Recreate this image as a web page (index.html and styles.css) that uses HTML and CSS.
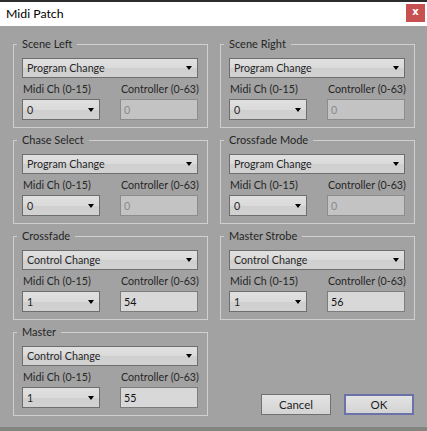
FILE: index.html
```html
<!DOCTYPE html>
<html>
<head>
<meta charset="utf-8">
<link rel="stylesheet" href="styles.css">
</head>
<body>
<div class="window">
  <div class="titlebar">
    <span class="title">Midi Patch</span>
    <span class="close">x</span>
  </div>
  <div class="content">
    <div class="group">
      <span class="legend">Scene Left</span>
      <div class="select"><span>Program Change</span><i class="arrow"></i></div>
      <div class="row">
        <div class="col"><div class="lbl">Midi Ch (0-15)</div><div class="select"><span>0</span><i class="arrow"></i></div></div>
        <div class="col"><div class="lbl">Controller (0-63)</div><div class="input disabled">0</div></div>
      </div>
    </div>
    <div class="group">
      <span class="legend">Scene Right</span>
      <div class="select"><span>Program Change</span><i class="arrow"></i></div>
      <div class="row">
        <div class="col"><div class="lbl">Midi Ch (0-15)</div><div class="select"><span>0</span><i class="arrow"></i></div></div>
        <div class="col"><div class="lbl">Controller (0-63)</div><div class="input disabled">0</div></div>
      </div>
    </div>
    <div class="group">
      <span class="legend">Chase Select</span>
      <div class="select"><span>Program Change</span><i class="arrow"></i></div>
      <div class="row">
        <div class="col"><div class="lbl">Midi Ch (0-15)</div><div class="select"><span>0</span><i class="arrow"></i></div></div>
        <div class="col"><div class="lbl">Controller (0-63)</div><div class="input disabled">0</div></div>
      </div>
    </div>
    <div class="group">
      <span class="legend">Crossfade Mode</span>
      <div class="select"><span>Program Change</span><i class="arrow"></i></div>
      <div class="row">
        <div class="col"><div class="lbl">Midi Ch (0-15)</div><div class="select"><span>0</span><i class="arrow"></i></div></div>
        <div class="col"><div class="lbl">Controller (0-63)</div><div class="input disabled">0</div></div>
      </div>
    </div>
    <div class="group">
      <span class="legend">Crossfade</span>
      <div class="select"><span>Control Change</span><i class="arrow"></i></div>
      <div class="row">
        <div class="col"><div class="lbl">Midi Ch (0-15)</div><div class="select"><span>1</span><i class="arrow"></i></div></div>
        <div class="col"><div class="lbl">Controller (0-63)</div><div class="input">54</div></div>
      </div>
    </div>
    <div class="group">
      <span class="legend">Master Strobe</span>
      <div class="select"><span>Control Change</span><i class="arrow"></i></div>
      <div class="row">
        <div class="col"><div class="lbl">Midi Ch (0-15)</div><div class="select"><span>1</span><i class="arrow"></i></div></div>
        <div class="col"><div class="lbl">Controller (0-63)</div><div class="input">56</div></div>
      </div>
    </div>
    <div class="group">
      <span class="legend">Master</span>
      <div class="select"><span>Control Change</span><i class="arrow"></i></div>
      <div class="row">
        <div class="col"><div class="lbl">Midi Ch (0-15)</div><div class="select"><span>1</span><i class="arrow"></i></div></div>
        <div class="col"><div class="lbl">Controller (0-63)</div><div class="input">55</div></div>
      </div>
    </div>
    <div class="buttons">
      <div class="btn">Cancel</div>
      <div class="btn default">OK</div>
    </div>
  </div>
</div>
</body>
</html>
```

FILE: styles.css
```css
html {
  background: linear-gradient(#2c2c2c 0, #2c2c2c 2px, #85857f 2px);
  height: 100%;
}
body {
  margin: 0;
  font-family: Lato, "Liberation Sans", sans-serif;
  font-size: 10.7px;
  color: #262626;
}
.window {
  margin-top: 2px;
  width: 427px;
  height: 425px;
  background: #a2a2a2;
  display: flex;
  flex-direction: column;
}
.titlebar {
  height: 24px;
  background: #ffffff;
  display: flex;
  justify-content: space-between;
  align-items: flex-start;
  flex: none;
}
.title {
  font-size: 12.3px;
  line-height: 24px;
  padding-left: 6px;
  color: #000;
}
.close {
  margin-top: 2px;
  margin-right: 2px;
  width: 19px;
  height: 18px;
  background: #c75050;
  color: #fff;
  font-family: "DejaVu Sans", sans-serif;
  font-weight: bold;
  font-size: 10px;
  line-height: 16px;
  text-align: center;
}
.content {
  padding: 18px 12px 0 13px;
  display: grid;
  grid-template-columns: 195px 195px;
  grid-auto-rows: 84px;
  column-gap: 12px;
  row-gap: 12px;
}
.group {
  position: relative;
  box-sizing: border-box;
  border: 1px solid #cfcfcf;
  padding: 13px 9px 0 8px;
}
.legend {
  position: absolute;
  top: -8px;
  left: 3px;
  padding: 0 5px;
  background: #a2a2a2;
  line-height: 14px;
  font-size: 11px;
  color: #262626;
}
.select {
  box-sizing: border-box;
  height: 20px;
  border: 1px solid #6e6e6e;
  background: linear-gradient(#e0e0e0 0%, #dadada 50%, #cfcfcf 51%, #d2d2d2 100%);
  display: flex;
  align-items: center;
  justify-content: space-between;
  padding: 0 4px 0 4px;
  line-height: 18px;
}
.arrow {
  width: 0;
  height: 0;
  border-top: 4px solid #000;
  border-left: 3.5px solid transparent;
  border-right: 3.5px solid transparent;
  margin-right: 1px;
}
.row {
  display: grid;
  grid-template-columns: 78px 78px;
  column-gap: 20px;
}
.lbl {
  height: 21px;
  box-sizing: border-box;
  padding: 4px 0 0 1px;
  line-height: 13px;
  color: #262626;
  white-space: nowrap;
}
.col .select {
  height: 21px;
}
.input {
  box-sizing: border-box;
  height: 21px;
  border: 1px solid #7c7c7c;
  background: #d8d8d8;
  padding-left: 3px;
  line-height: 19px;
  color: #111;
}
.input.disabled {
  background: #c3c3c3;
  border-color: #8c8c8c;
  color: #8a8a8a;
}
.buttons {
  display: flex;
  justify-content: flex-end;
  align-items: flex-end;
  gap: 13px;
  padding: 0 1px 1px 0;
}
.btn {
  box-sizing: border-box;
  width: 70px;
  height: 21px;
  border: 1px solid #707070;
  background: linear-gradient(#e3e3e3, #d3d3d3);
  text-align: center;
  line-height: 19px;
  font-size: 11.5px;
  color: #1c1c1c;
}
.btn.default {
  border: 2px solid #6a72a8;
  line-height: 17px;
}
```
